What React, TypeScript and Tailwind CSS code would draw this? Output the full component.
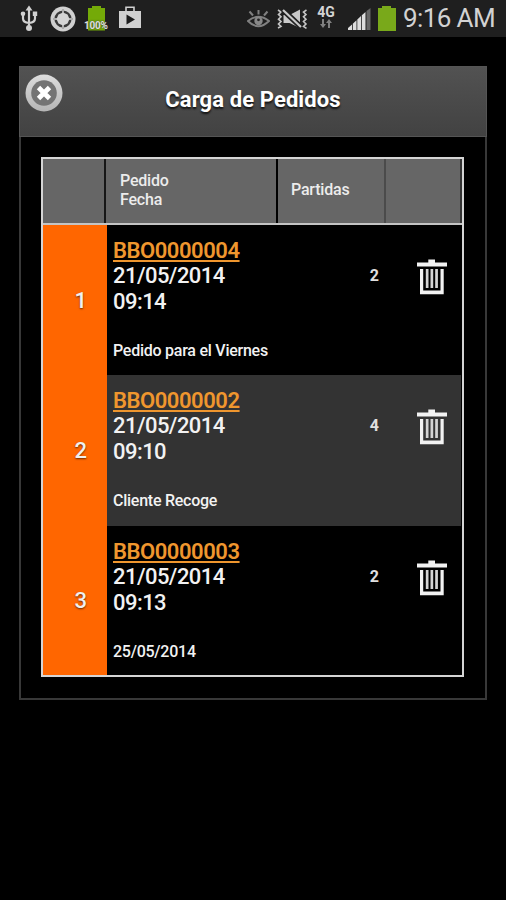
interface Order {
  id: string;
  date: string;
  time: string;
  note: string;
  items: number;
}

const orders: Order[] = [
  { id: "BBO0000004", date: "21/05/2014", time: "09:14", note: "Pedido para el Viernes", items: 2 },
  { id: "BBO0000002", date: "21/05/2014", time: "09:10", note: "Cliente Recoge", items: 4 },
  { id: "BBO0000003", date: "21/05/2014", time: "09:13", note: "25/05/2014", items: 2 },
];

const rowStyles = ["h-[150px] bg-black", "h-[151px] bg-[#333333]", "h-[149px] bg-black"];

function UsbIcon() {
  return (
    <svg width="18" height="27" viewBox="0 0 18 27" fill="none" stroke="#d0d0d0" strokeWidth="2.2">
      <path d="M9 4v18M3 9v4.500q0 4 6 4.500M15 9v4.500q0 4-6 4.500" />
      <path d="M9 0.500l3.500 5h-7z" fill="#d0d0d0" stroke="none" />
      <circle cx="3" cy="8.700" r="2.300" fill="#d0d0d0" stroke="none" />
      <path d="M12.800 6.500h4.400v4.400h-4.400z" fill="#d0d0d0" stroke="none" />
      <circle cx="9" cy="23" r="3" fill="#d0d0d0" stroke="none" />
    </svg>
  );
}

function TargetIcon() {
  return (
    <svg width="26" height="26" viewBox="0 0 26 26">
      <circle cx="13" cy="13" r="12.500" fill="#d0d0d0" />
      <circle cx="13" cy="13" r="8.600" fill="#3a3a3a" />
      <path d="M13 3v4M13 19v4M3 13h4M19 13h4" stroke="#aaaaaa" strokeWidth="2" />
      <path d="M13 6.500l4.500 2 2 4.500-2 4.500-4.500 2-4.500-2-2-4.500 2-4.500z" fill="#d4d4d4" />
    </svg>
  );
}

function BatteryFullIcon() {
  return (
    <div className="relative h-[26px] w-[26px]">
      <svg width="26" height="26" viewBox="0 0 26 26">
        <path d="M8 0h9v2h4v22.500H4V2h4z" fill="#74aa08" />
      </svg>
      <span className="absolute left-0 top-[14px] text-[10px] font-bold leading-[12px] tracking-[-0.2px] text-[#dedede] [text-shadow:0_0_2px_#333]">
        100%
      </span>
    </div>
  );
}

function PlayStoreIcon() {
  return (
    <svg width="22" height="23" viewBox="0 0 22 23">
      <path d="M7 6V1.200h8V6" fill="none" stroke="#d0d0d0" strokeWidth="1.600" />
      <path d="M0 5h22v17H0z" fill="#d0d0d0" />
      <path d="M7.500 8.500l8.500 5-8.500 5z" fill="#1c1c1c" />
    </svg>
  );
}

function EyeIcon() {
  return (
    <svg width="23" height="18" viewBox="0 0 23 18" fill="none" stroke="#808080" strokeWidth="2">
      <path d="M1 11q10-8.500 21 0q-11 10.500-21 0z" />
      <path d="M2.500 1.500l3.500 4M11.500 0v4.500M20.500 1.500l-3.500 4" />
      <circle cx="11.500" cy="11" r="4.200" fill="#888" stroke="none" />
      <circle cx="11.500" cy="9.800" r="1.400" fill="#222" stroke="none" />
    </svg>
  );
}

function VibrateIcon() {
  return (
    <svg width="31" height="20" viewBox="0 0 31 20" fill="none">
      <path
        d="M1 1l3 2-2.500 2.400 2.500 2.400-2.500 2.400 2.500 2.400-2.500 2.400 2.500 2.400L1 19M29.500 1l-3 2 2.500 2.400-2.500 2.400 2.500 2.400-2.500 2.400 2.500 2.400-2.500 2.400 3 2"
        stroke="#c4c4c4"
        strokeWidth="1.600"
      />
      <path d="M6.500 6h6l10.500-5.500v18.500L12.500 14h-6z" fill="#c8c8c8" />
      <path d="M6 1l18 17" stroke="#1f1f1f" strokeWidth="5.500" />
      <path d="M6 1l18 17" stroke="#c8c8c8" strokeWidth="2.200" />
    </svg>
  );
}

function NetworkIcon() {
  return (
    <div className="flex w-[20px] flex-col items-center">
      <span className="text-[14px] font-bold leading-[13px] text-[#d4d4d4]">4G</span>
      <svg width="12" height="9" viewBox="0 0 12 9">
        <path d="M2 0h2v5h2L3 9 0 5h2zM8 9h2V4h2L9 0 6 4h2z" fill="#808080" />
      </svg>
    </div>
  );
}

function SignalIcon() {
  return (
    <svg width="23" height="22" viewBox="0 0 23 22">
      <path d="M0 22v-2l4-3.500V22zM4.800 22v-6.300l3.700-3.400V22zM9.300 22V11.500l3.700-3.400V22zM13.800 22V7.300l3.700-3.400V22z" fill="#dcdcdc" />
      <path d="M18.500 22V3L22.500 0v22z" fill="#666" />
    </svg>
  );
}

function StatusBar() {
  return (
    <div className="flex h-[37px] items-start bg-[#1f1f1f] pl-[20px]">
      <div className="pt-[5px]"><UsbIcon /></div>
      <div className="ml-[12px] pt-[6px]"><TargetIcon /></div>
      <div className="ml-[8px] pt-[6px]"><BatteryFullIcon /></div>
      <div className="ml-[9px] pt-[6px]"><PlayStoreIcon /></div>
      <div className="ml-[106px] pt-[10px]"><EyeIcon /></div>
      <div className="ml-[7px] pt-[9px]"><VibrateIcon /></div>
      <div className="ml-[8px] pt-[6px]"><NetworkIcon /></div>
      <div className="ml-[12px] pt-[8px]"><SignalIcon /></div>
      <svg className="ml-[7px] mt-[6px]" width="18" height="25" viewBox="0 0 18 25">
        <path d="M4 0h9v2h5v23H0V2h4z" fill="#79a91a" />
      </svg>
      <span className="ml-[7px] whitespace-nowrap pt-[4px] text-[26px] leading-[28px] tracking-[-0.6px] text-[#d2d2d2]">
        9:16 AM
      </span>
    </div>
  );
}

function CloseButton() {
  return (
    <button className="absolute left-[5px] top-[7px]" aria-label="Cerrar">
      <svg width="38" height="38" viewBox="0 0 38 38">
        <defs>
          <linearGradient id="ring" x1="0" y1="0" x2="0" y2="1">
            <stop offset="0" stopColor="#dddddd" />
            <stop offset="1" stopColor="#b5b5b5" />
          </linearGradient>
        </defs>
        <circle cx="19" cy="19" r="18.500" fill="url(#ring)" />
        <circle cx="19" cy="19" r="12.800" fill="#747474" />
        <path d="M13.500 13.500l11 11M24.500 13.500l-11 11" stroke="#fff" strokeWidth="4.800" />
      </svg>
    </button>
  );
}

function TrashIcon() {
  return (
    <svg width="30" height="36" viewBox="0 0 30 36" fill="#f2f2f2">
      <path d="M11.300 0.500h6.700v3h-6.700zM0 3.500h30v4H0z" />
      <path d="M3 10h3.200v21.500h17.300V10h3.200v25.300H3z" />
      <path d="M8.800 10h2.700v19H8.800zM13.500 10h2.700v19h-2.700zM18.200 10h2.700v19h-2.700z" fill="#d4d4d4" />
    </svg>
  );
}

function OrderRow({ order, index }: { order: Order; index: number }) {
  return (
    <div className={`mr-[1px] flex shrink-0 ${rowStyles[index]}`}>
      <div className="flex w-[64px] items-center justify-end bg-[#ff6600] pr-[20px] text-[22px] font-medium text-[#f0f0f0] [text-shadow:0_1px_2px_#00000099]">
        {index + 1}
      </div>
      <div className="w-[172px] whitespace-nowrap pl-[6px] pt-[13px] text-[22px] font-medium leading-[25.300px] tracking-[-0.55px] text-[#f2f2f2]">
        <a className="block font-semibold tracking-[-0.45px] text-[#ef962e] underline decoration-2 underline-offset-2">
          {order.id}
        </a>
        <p>{order.date}</p>
        <p>{order.time}</p>
        <p className="mt-[27px] text-[16px] leading-[20px] tracking-[-0.25px]">{order.note}</p>
      </div>
      <div className="w-[100px] pt-[41px] text-right text-[16px] font-bold leading-[20px] text-[#e0e0e0]">
        {order.items}
      </div>
      <div className="ml-[38px] pt-[34px]">
        <TrashIcon />
      </div>
    </div>
  );
}

export default function App() {
  return (
    <div className="h-[900px] w-[506px] overflow-hidden bg-black font-['Roboto',sans-serif]">
      <StatusBar />
      <div className="ml-[19px] mt-[29px] h-[634px] w-[468px] border-2 border-[#383838]">
        <div className="relative -mx-[2px] -mt-[2px] flex h-[71px] items-center justify-center border border-[#555] bg-linear-to-b from-[#525252] to-[#424242]">
          <CloseButton />
          <h1 className="whitespace-nowrap pb-[4px] text-[22px] font-bold tracking-[0.1px] text-white [text-shadow:0_2px_2px_#111]">
            Carga de Pedidos
          </h1>
        </div>
        <div className="ml-[20px] mt-[20px] flex h-[520px] w-[423px] flex-col border-2 border-[#d5d5d5]">
          <div className="flex h-[66px] shrink-0 border-b-2 border-[#c4c4c4] bg-[#666666] text-[16px] font-medium leading-[18.500px] tracking-[-0.2px] text-[#ececec]">
            <div className="w-[63px] border-r-2 border-[#161616]" />
            <div className="w-[172px] border-r-2 border-black pl-[14px] pt-[13px]">
              <p>Pedido</p>
              <p>Fecha</p>
            </div>
            <div className="flex w-[108px] items-center border-r-2 border-[#4b4b4b] pb-[2px] pl-[13px]">Partidas</div>
            <div className="flex-1 border-r-2 border-[#333]" />
          </div>
          {orders.map((order, i) => (
            <OrderRow key={order.id} order={order} index={i} />
          ))}
        </div>
      </div>
    </div>
  );
}
